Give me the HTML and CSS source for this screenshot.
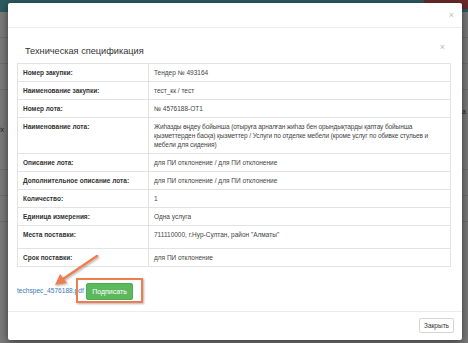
FILE: index.html
```html
<!DOCTYPE html>
<html lang="ru">
<head>
<meta charset="utf-8">
<title>Техническая спецификация</title>
<link rel="stylesheet" href="styles.css">
</head>
<body>
<div class="page">
  <div class="topbar"><span class="badge"></span></div>
  <div class="bg-row"></div>
  <div class="bg-row"></div>
  <div class="bg-row"></div>
  <div class="bg-row tall"><span class="bg-text">ix</span><span class="bg-text right">a</span></div>
  <div class="bg-row"></div>
  <div class="bg-row"></div>
</div>

<div class="modal">
  <div class="modal-header"><span class="close">×</span></div>
  <div class="modal-body">
    <div class="inner-header">
      <h4 class="title">Техническая спецификация</h4>
      <span class="close inner">×</span>
    </div>
    <table class="spec">
      <tr><th>Номер закупки:</th><td>Тендер № 493164</td></tr>
      <tr><th>Наименование закупки:</th><td>тест_кк / тест</td></tr>
      <tr><th>Номер лота:</th><td>№ 4576188-ОТ1</td></tr>
      <tr><th>Наименование лота:</th><td class="long">Жиһазды өңдеу бойынша (отыруға арналған жиһаз бен орындықтарды қаптау бойынша<br><span class="nw">қызметтерден басқа) қызметтер / Услуги по отделке мебели (кроме услуг по обивке стульев и</span><br>мебели для сидения)</td></tr>
      <tr><th>Описание лота:</th><td>для ПИ отклонение / для ПИ отклонение</td></tr>
      <tr><th>Дополнительное описание лота:</th><td>для ПИ отклонение / для ПИ отклонение</td></tr>
      <tr><th>Количество:</th><td>1</td></tr>
      <tr><th>Единица измерения:</th><td>Одна услуга</td></tr>
      <tr class="place"><th>Места поставки:</th><td>711110000, г.Нур-Султан, район "Алматы"</td></tr>
      <tr><th>Срок поставки:</th><td>для ПИ отклонение</td></tr>
    </table>
    <div class="actions">
      <a class="file-link" href="#">techspec_4576188.pdf</a>
      <span class="highlight"><button class="btn-sign">Подписать</button></span>
    </div>
  </div>
  <div class="modal-footer">
    <button class="btn-close">Закрыть</button>
  </div>
</div>

<svg class="arrow" width="468" height="343" viewBox="0 0 468 343">
  <defs>
    <filter id="sh" x="-20%" y="-20%" width="140%" height="140%">
      <feDropShadow dx="1" dy="1" stdDeviation="0.8" flood-color="#000" flood-opacity="0.35"/>
    </filter>
  </defs>
  <g filter="url(#sh)">
    <line x1="97" y1="256" x2="63" y2="279" stroke="#ef7d4f" stroke-width="2.4" stroke-linecap="round"/>
    <polygon points="55,285 60,274 67,283" fill="#ef7d4f"/>
  </g>
</svg>
</body>
</html>
```
FILE: styles.css
```css
* { box-sizing: border-box; }
html, body {
  margin: 0;
  padding: 0;
  width: 468px;
  height: 343px;
  overflow: hidden;
}
body {
  background: #7a7a7a;
  font-family: "Liberation Sans", Arial, sans-serif;
  color: #333;
  position: relative;
}
.page { display: flex; flex-direction: column; }
.topbar {
  height: 12px;
  background: #2b5b60;
  display: flex;
  justify-content: flex-end;
}
.badge {
  width: 44px;
  height: 9px;
  background: #6b2a2a;
}
.bg-row {
  height: 26px;
  border-bottom: 1px solid #6e6e6e;
  position: relative;
}
.bg-row.tall { height: 80px; }
.bg-text {
  font-size: 7px;
  color: #222;
  position: absolute;
  left: -1px;
  top: 36px;
}
.bg-text.right { left: 462px; top: 18px; }

.modal {
  position: absolute;
  left: 8px;
  top: 3px;
  width: 454px;
  height: 337px;
  background: #fff;
  border-radius: 2px;
  box-shadow: 0 2px 8px rgba(0,0,0,0.55);
  display: flex;
  flex-direction: column;
}
.modal-header {
  height: 25px;
  border-bottom: 1px solid #ececec;
  display: flex;
  justify-content: flex-end;
  align-items: center;
  padding-right: 8px;
}
.close {
  font-size: 9px;
  color: #bdbdbd;
  line-height: 1;
}
.modal-body {
  padding: 0 11px 0 9px;
  flex: 1;
}
.inner-header {
  display: flex;
  justify-content: space-between;
  align-items: center;
  padding: 11px 6px 0 8px;
  height: 35px;
}
.title {
  margin: 0;
  font-size: 9.2px;
  font-weight: normal;
  color: #333;
  line-height: 12px;
  padding-bottom: 1px;
}
.close.inner { margin-top: -8px; }

.spec {
  width: 434px;
  table-layout: fixed;
  border-collapse: collapse;
  border: 1px solid #e3e3e3;
  font-size: 6.5px;
  line-height: 9px;
}
.spec th, .spec td {
  border: 1px solid #e3e3e3;
  padding: 4px 1px 4px 5px;
  text-align: left;
  vertical-align: top;
}
.spec th {
  width: 131px;
  font-weight: bold;
  color: #333;
}
.spec td { color: #444; }
.spec td.long { letter-spacing: -0.1px; }
.nw { white-space: nowrap; }
.spec tr.place td, .spec tr.place th { padding-bottom: 9px; }

.actions {
  display: flex;
  align-items: center;
  margin-top: 11px;
  height: 25px;
}
.file-link {
  font-size: 6.6px;
  color: #3a78b5;
  text-decoration: none;
  width: 59px;
  white-space: nowrap;
}
.highlight {
  border: 2px solid #ef7d4f;
  padding: 3px 8px 1px 8px;
  box-shadow: 1px 1px 2px rgba(0,0,0,0.3);
  display: flex;
  background: transparent;
}
.btn-sign {
  font-family: "Liberation Sans", Arial, sans-serif;
  font-size: 7px;
  color: #fff;
  background: #5cb85c;
  border: 1px solid #4cae4c;
  border-radius: 2px;
  width: 47px;
  height: 17px;
  padding: 0;
}
.modal-footer {
  border-top: 1px solid #ececec;
  height: 29px;
  display: flex;
  justify-content: flex-end;
  align-items: flex-start;
  padding: 6px 8px 0 0;
}
.btn-close {
  font-family: "Liberation Sans", Arial, sans-serif;
  font-size: 6.5px;
  color: #333;
  background: #fff;
  border: 1px solid #d5d5d5;
  border-radius: 2px;
  width: 35px;
  height: 15px;
  padding: 0;
}
.arrow {
  position: absolute;
  left: 0;
  top: 0;
  pointer-events: none;
}
```
